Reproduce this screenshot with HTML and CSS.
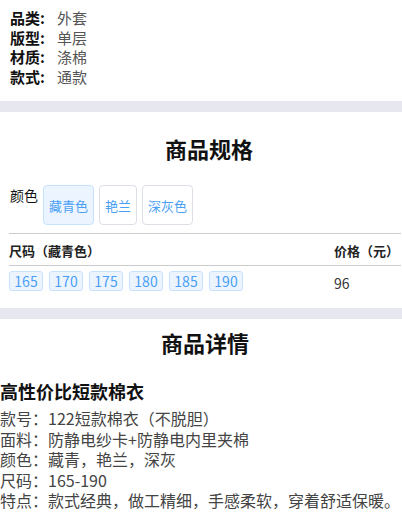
FILE: index.html
```html
<!DOCTYPE html>
<html lang="zh">
<head>
<meta charset="utf-8">
<link rel="stylesheet" href="styles.css">
</head>
<body>
<div class="attrs">
  <div class="attr"><b class="attr-label">品类:</b><span class="attr-value">外套</span></div>
  <div class="attr"><b class="attr-label">版型:</b><span class="attr-value">单层</span></div>
  <div class="attr"><b class="attr-label">材质:</b><span class="attr-value">涤棉</span></div>
  <div class="attr"><b class="attr-label">款式:</b><span class="attr-value">通款</span></div>
</div>
<div class="sep"></div>
<section class="spec">
  <h2 class="title">商品规格</h2>
  <div class="colors">
    <span class="colors-label">颜色</span>
    <span class="chip chip-active">藏青色</span>
    <span class="chip">艳兰</span>
    <span class="chip">深灰色</span>
  </div>
  <div class="table">
    <div class="row head">
      <div class="col-size">尺码（藏青色）</div>
      <div class="col-price">价格（元）</div>
    </div>
    <div class="row body">
      <div class="col-size sizes">
        <span class="size">165</span><span class="size">170</span><span class="size">175</span><span class="size">180</span><span class="size">185</span><span class="size">190</span>
      </div>
      <div class="col-price price">96</div>
    </div>
  </div>
</section>
<div class="sep"></div>
<section class="detail">
  <h2 class="title">商品详情</h2>
  <h3 class="detail-name">高性价比短款棉衣</h3>
  <p class="detail-line">款号：122短款棉衣（不脱胆）</p>
  <p class="detail-line">面料：防静电纱卡+防静电内里夹棉</p>
  <p class="detail-line">颜色：藏青，艳兰，深灰</p>
  <p class="detail-line">尺码：165-190</p>
  <p class="detail-line">特点：款式经典，做工精细，手感柔软，穿着舒适保暖。</p>
</section>
</body>
</html>
```

FILE: styles.css
```css
* { box-sizing: border-box; }
html, body { margin: 0; padding: 0; background: #fff; }
body {
  font-family: "Noto Sans CJK SC", "Noto Sans", sans-serif;
  color: #333;
  width: 402px;
  overflow: hidden;
}
.attrs { padding: 8px 10px 15px; }
.attr { font-size: 15px; line-height: 19.5px; display: flex; }
.attr-label { color: #111; font-weight: 700; width: 47px; }
.attr-value { color: #555; }
.sep { height: 11px; background: #e6e7ef; }
.title {
  margin: 0;
  font-size: 22px;
  font-weight: 700;
  color: #111;
  text-align: center;
  padding-left: 8px;
  line-height: 30px;
}
.spec { padding: 21px 1px 15px 9px; }
.colors { display: flex; align-items: flex-start; margin-top: 22px; gap: 5px; }
.colors-label { font-size: 14px; color: #111; line-height: 20px; width: 29px; padding-left: 1px; }
.chip {
  height: 40px;
  padding: 0 5px;
  display: inline-flex;
  align-items: center;
  border: 1px solid #dcdfe6;
  border-radius: 4px;
  font-size: 13px;
  color: #4a9ff5;
  background: #fff;
}
.chip-active { background: #ecf5ff; border-color: #c6e2ff; }
.table { margin-top: 8px; border-top: 1px solid #ccc; }
.row { display: flex; }
.head { border-bottom: 1px solid #ccc; height: 32px; align-items: center; font-size: 13px; font-weight: 700; color: #222; padding-top: 1px; }
.col-size { flex: 1; }
.col-price { width: 67px; }
.body { padding-top: 5px; align-items: flex-start; }
.sizes { display: flex; gap: 6px; }
.size {
  height: 20px;
  width: 34px;
  display: inline-flex;
  align-items: center;
  justify-content: center;
  font-size: 14px;
  color: #4a9ff5;
  background: #ecf5ff;
  border: 1px solid #c6e2ff;
  border-radius: 3px;
}
.price { font-size: 14px; color: #333; line-height: 20px; padding-top: 2px; }
.detail { padding: 8px 0 0; }
.detail-name { margin: 22px 0 5px; font-size: 18px; font-weight: 700; color: #111; line-height: 24px; }
.detail-line {
  margin: 0;
  font-size: 16px;
  line-height: 20.5px;
  height: 20.5px;
  color: #444;
  white-space: nowrap;
}
```
